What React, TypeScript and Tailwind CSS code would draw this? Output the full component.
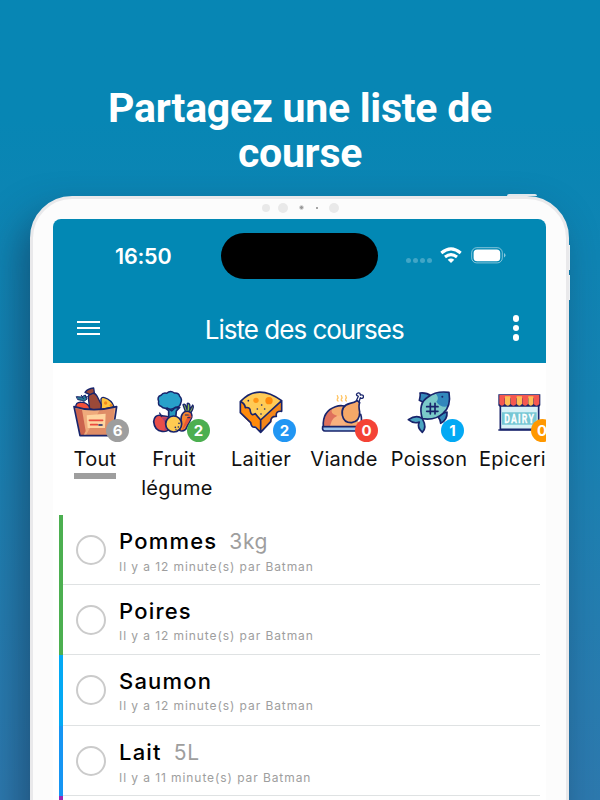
import type { FC, ReactNode } from "react";

import clsx from "clsx";

const NAVY = "#18246b";

const BasketIcon: FC = () => (
  <svg viewBox="-3 0 216 180" className="h-[60px] w-[72px]" strokeLinejoin="round" strokeLinecap="round">
    <path d="M47 86 Q45 65 65 67 Q78 66 88 80 L90 90Z" fill="#f2503b" stroke={NAVY} strokeWidth="4" />
    <path d="M123 57 Q126 50 133 53 Q155 60 162 80 L123 89Z" fill="#ffc43d" stroke={NAVY} strokeWidth="4" />
    <circle cx="137" cy="69" r="5" fill="#ef8a1d" />
    <circle cx="153" cy="76" r="4" fill="#ef8a1d" />
    <path d="M89 86 L85 54 Q85 40 97 39 Q106 39 111 48 L124 74 L122 90 H100Z" fill="#9b4938" stroke={NAVY} strokeWidth="4" />
    <path d="M75 37 Q83 26 101 24 L103 38 L90 44Z" fill="#9b4938" stroke={NAVY} strokeWidth="4" />
    <path d="M50 50 L64 51 L76 45 L81 57 L72 64 L64 61 L54 59Z" fill="#287c94" stroke={NAVY} strokeWidth="3" />
    <path d="M64 46 L70 56 M76 51 L84 50" stroke={NAVY} strokeWidth="3" />
    <path d="M42 80 Q98 98 170 80 L157 167 H60Z" fill="#efaa7b" />
    <path d="M45 84 L66 89 L77 153 L70 167 H60Z" fill="#cb634d" />
    <path d="M119 90 Q149 87 163 82 L157 167 H77Z" fill="#df8d67" />
    <path d="M80 106 L137 101 L135 144 H83Z" fill="#fed5a0" />
    <path d="M42 80 Q98 98 170 80 L157 167 H60Z" fill="none" stroke={NAVY} strokeWidth="5" />
    <path d="M88 121 H128 M92 134 H112" stroke="#ea4b3e" strokeWidth="5" />
    <path d="M117 135 H126" stroke={NAVY} strokeWidth="5" />
  </svg>
);

const VegetableIcon: FC = () => (
  <svg viewBox="3 0 216 180" className="h-[60px] w-[72px]" strokeLinejoin="round" strokeLinecap="round">
    <path d="M61 106 Q43 104 41 125 Q44 153 66 154 Q91 158 93 130 Q92 107 71 108Z" fill="#e94e49" stroke={NAVY} strokeWidth="5" />
    <path d="M65 113 Q80 126 73 151 Q89 148 91 127 L84 112Z" fill="#ab426f" />
    <path d="M65 110 L59 99" stroke={NAVY} strokeWidth="4" />
    <path d="M76 84 L86 92 V114 H107 L109 93 L119 82Z" fill="#279abd" stroke={NAVY} strokeWidth="5" />
    <path d="M63 79 Q53 76 56 64 Q50 50 63 46 Q69 37 80 40 Q91 29 103 39 Q117 38 119 49 Q128 58 122 70 Q120 81 106 82 Q93 92 82 84 Q70 87 63 79Z" fill="#28a1ca" stroke={NAVY} strokeWidth="4.5" />
    <path d="M88 88 L95 93 L102 87" fill="none" stroke={NAVY} strokeWidth="4" />
    <path d="M136 94 L129 74 Q136 67 141 89 L142 70 Q153 68 149 91 L158 75 Q164 79 153 98Z" fill="#8dbe49" stroke={NAVY} strokeWidth="4" />
    <path d="M124 109 Q129 92 145 94 Q158 99 155 112 L137 148 Q127 156 119 151Z" fill="#f58730" stroke={NAVY} strokeWidth="5" />
    <path d="M151 99 L138 119 L125 152 L145 128 L155 111Z" fill="#e75636" />
    <path d="M136 105 H145 M143 113 H150" stroke={NAVY} strokeWidth="3" />
    <circle cx="101" cy="132" r="24" fill="#ffcb51" stroke={NAVY} strokeWidth="5" />
    <g fill={NAVY}>
      <circle cx="117" cy="130" r="2.5" />
      <circle cx="106" cy="142" r="2.5" />
      <circle cx="115" cy="141" r="2.5" />
      <circle cx="108" cy="148" r="2" />
    </g>
  </svg>
);

const CheeseIcon: FC = () => (
  <svg viewBox="0 0 216 180" className="h-[60px] w-[72px]" strokeLinejoin="round" strokeLinecap="round">
    <path d="M46 65 Q98 9 170 62 L107 121 L91 105 Q75 105 75 88 Q58 86 46 65Z" fill="#ffcb56" />
    <path d="M46 65 Q57 69 61 83 Q74 80 76 94 Q83 109 91 101 Q97 109 107 120 V157 Q96 151 91 138 Q84 144 77 129 Q62 119 46 98Z" fill="#ff8a0b" />
    <path d="M107 120 L170 62 V94 Q156 91 154 109 Q140 111 139 127 L107 157Z" fill="#f58619" />
    <path d="M46 65 Q98 9 170 62 V94 Q151 92 154 109 Q137 108 137 125 L107 157 L91 141 Q79 144 77 128 L46 98Z M46 65 Q59 69 61 83 Q76 80 76 94 Q79 109 91 101 Q98 110 107 120 L170 62 M107 120 V157" fill="none" stroke={NAVY} strokeWidth="5" />
    <circle cx="93" cy="61" r="8" fill="#ff9414" />
    <circle cx="132" cy="62" r="11" fill="#ff8a0b" />
    <g fill={NAVY}>
      <circle cx="70" cy="62" r="2.5" />
      <circle cx="110" cy="75" r="2.5" />
      <circle cx="119" cy="87" r="2.5" />
      <circle cx="97" cy="87" r="2.5" />
      <circle cx="108" cy="102" r="2.5" />
    </g>
  </svg>
);

const MeatIcon: FC = () => (
  <svg viewBox="-6 0 216 180" className="h-[60px] w-[72px]" strokeLinejoin="round" strokeLinecap="round">
    <path d="M82 47 Q86 53 82 57 Q80 60 84 63 M94 47 Q98 53 94 57 Q92 60 96 63 M107 47 Q111 53 107 57 Q105 60 109 63" fill="none" stroke="#ffc565" strokeWidth="4" />
    <path d="M40 139 Q37 94 76 80 Q111 71 125 89 L152 139Z" fill="#f5ac70" />
    <path d="M42 137 Q40 101 66 88 Q59 101 81 107 Q76 126 93 138Z" fill="#df705c" />
    <path d="M60 138 Q67 104 97 106 L108 138Z" fill="#f7b17f" />
    <path d="M40 139 Q37 94 76 80 Q91 75 102 78 M152 103 Q158 121 150 139" fill="none" stroke={NAVY} strokeWidth="5" />
    <path d="M97 106 Q92 77 120 70 Q134 68 142 61 L149 68 Q145 77 149 96 Q150 124 125 128 Q102 129 97 106Z" fill="#f5a868" stroke={NAVY} strokeWidth="5" />
    <path d="M140 60 L145 49 Q134 44 144 39 Q151 38 151 45 Q162 43 160 52 Q157 58 151 53 L147 66Z" fill="#fff" stroke={NAVY} strokeWidth="4" />
    <path d="M38 140 H151 V153 H45 Q36 153 38 140Z" fill="#9bc4ed" stroke={NAVY} strokeWidth="5" />
  </svg>
);

const FishIcon: FC = () => (
  <svg viewBox="-6 0 216 180" className="h-[60px] w-[72px]" strokeLinejoin="round" strokeLinecap="round">
    <path d="M73 61 Q77 44 75 39 Q95 37 108 48 L88 68Z M137 105 Q146 98 156 96 Q158 119 137 130 Q137 119 130 112Z" fill="#3389ba" stroke={NAVY} strokeWidth="5" />
    <path d="M82 116 Q68 70 99 51 Q123 32 162 37 Q169 78 145 99 Q121 122 82 116Z" fill="#7ac9c9" />
    <path d="M123 42 Q143 34 162 37 Q165 61 158 79 Q138 85 124 65 Q134 55 123 42Z" fill="#3187bc" />
    <path d="M82 116 Q68 70 99 51 Q123 32 162 37 Q169 78 145 99 Q121 122 82 116Z" fill="none" stroke={NAVY} strokeWidth="5" />
    <path d="M82 116 Q65 102 40 119 Q57 133 73 126 Q65 142 82 157 Q97 143 82 116Z" fill="#4ba5c1" stroke={NAVY} strokeWidth="5" />
    <path d="M106 70 V102 M120 70 V102 M95 80 H129 M95 94 H129" stroke={NAVY} strokeWidth="5" />
    <circle cx="142" cy="50" r="3" fill={NAVY} />
  </svg>
);

const DairyIcon: FC = () => (
  <svg viewBox="21 0 216 180" className="h-[60px] w-[72px]" strokeLinejoin="round">
    <path d="M73 72 H188 V148 H73Z" fill="#d7f1f7" stroke={NAVY} strokeWidth="5" />
    <path d="M78 97 H182 V134 H78Z" fill="#76c7d4" />
    <path d="M67 150 H192" stroke={NAVY} strokeWidth="5" />
    <text
      x="131"
      y="129"
      textAnchor="middle"
      textLength="92"
      lengthAdjust="spacingAndGlyphs"
      fontFamily="Roboto, sans-serif"
      fontSize="37"
      fontWeight="700"
      letterSpacing="5"
      fill="#fff"
      stroke="#fff"
      strokeWidth="0.8"
    >
      DAIRY
    </text>
    <path d="M67 43 H193 V74 Q193 80 184 80 H76 Q67 80 67 74Z" fill={NAVY} />
    <path d="M70 45 H190 V55 H70Z" fill="#f55750" />
    <path d="M70 53 H86 V72 Q78 83 70 72Z M104 53 H121 V72 Q112 83 104 72Z M139 53 H156 V72 Q148 83 139 72Z M173 53 H190 V72 Q182 83 173 72Z" fill="#f55750" />
    <path d="M87 49 H103 V72 Q95 83 87 72Z M122 49 H138 V72 Q130 83 122 72Z M157 49 H172 V72 Q164 83 157 72Z" fill="#ffbd54" />
  </svg>
);

type Category = {
  label: string;
  count: number;
  icon: ReactNode;
  width: string;
  badge: string;
  active?: boolean;
};

const categories: Category[] = [
  { label: "Tout", count: 6, icon: <BasketIcon />, width: "w-20", badge: "left-[47px] bg-[#9e9e9e]", active: true },
  { label: "Fruit\u00a0 légume", count: 2, icon: <VegetableIcon />, width: "w-21", badge: "left-[46px] bg-[#4caf50]" },
  { label: "Laitier", count: 2, icon: <CheeseIcon />, width: "w-21", badge: "left-12 bg-[#2196f3]" },
  { label: "Viande", count: 0, icon: <MeatIcon />, width: "w-[82px]", badge: "left-[47px] bg-[#f44336]" },
  { label: "Poisson", count: 1, icon: <FishIcon />, width: "w-22", badge: "left-12 bg-[#03a9f4]" },
  { label: "Epicerie", count: 0, icon: <DairyIcon />, width: "w-[91px]", badge: "left-12 bg-[#ff9800]" },
];

const items = [
  { name: "Pommes", quantity: "3kg", minutes: 12, color: "bg-[#4caf50]" },
  { name: "Poires", minutes: 12, color: "bg-[#4caf50]" },
  { name: "Saumon", minutes: 12, color: "bg-[#03a9f4]" },
  { name: "Lait", quantity: "5L", minutes: 11, color: "bg-[#1695f3]" },
];

const StatusBar: FC = () => (
  <div className="flex h-[74px] items-start pt-[14px]">
    <div className="w-[168px] pt-[9px] pl-[62px] text-[21.5px] leading-7 font-semibold tracking-[-0.2px]">16:50</div>
    <div className="h-[46px] w-[157px] rounded-full bg-black" />
    <div className="flex items-center pt-[14px] pl-[28px]">
      <div className="mt-[10px] flex gap-[2px]">
        {[0, 1, 2, 3].map((dot) => (
          <div key={dot} className="size-[5px] rounded-full bg-white/25" />
        ))}
      </div>
      <svg viewBox="0 0 22 17" className="ml-2 h-[17px] w-[22px]" fill="none" stroke="white" strokeWidth="3">
        <path d="M1.3 6 Q11 -2.3 20.7 6" />
        <path d="M5 10 Q11 5.2 17 10" />
        <path d="M7.7 12.7 Q11 10.2 14.3 12.7 L11 16Z" fill="white" stroke="none" />
      </svg>
      <svg viewBox="0 0 35 17" className="ml-[8.5px] h-[17px] w-[35px]">
        <rect x="0.7" y="0.7" width="30.6" height="15.2" rx="5" fill="none" stroke="white" strokeOpacity="0.5" />
        <rect x="2.6" y="2.5" width="26.6" height="11.8" rx="3.6" fill="white" />
        <path d="M33 6 Q36 8 33 10.5Z" fill="white" fillOpacity="0.55" />
      </svg>
    </div>
  </div>
);

const AppBar: FC = () => (
  <div className="flex h-[70px] items-center justify-between pr-[24px] pl-6">
    <div className="flex flex-col gap-1">
      <div className="h-[2px] w-[23px] bg-white" />
      <div className="h-[2px] w-[23px] bg-white" />
      <div className="h-[2px] w-[23px] bg-white" />
    </div>
    <div className="pt-[2px] pr-[1px] text-[26px] tracking-[-1px]">Liste des courses</div>
    <div className="flex flex-col gap-[3px] px-[3px]">
      <div className="size-[6.5px] rounded-full bg-white" />
      <div className="size-[6.5px] rounded-full bg-white" />
      <div className="size-[6.5px] rounded-full bg-white" />
    </div>
  </div>
);

const CategoryTab: FC<{ category: Category }> = ({ category }) => (
  <div className={clsx("flex shrink-0 flex-col items-center", category.width)}>
    <div className="relative">
      {category.icon}
      <div
        className={clsx(
          "absolute top-[39px] flex size-[23px] items-center justify-center rounded-full pt-px text-[15px] font-bold text-white",
          category.badge,
        )}
      >
        {category.count}
      </div>
    </div>
    <div
      className={clsx(
        "mt-[5px] text-center text-[20px] tracking-[0.3px]",
        category.active ? "border-b-6 border-[#9e9e9e] leading-[28px]" : "leading-[29px]",
      )}
    >
      {category.label}
    </div>
  </div>
);

const ItemsList: FC = () => (
  <div className="mx-[6px] mt-[12px]">
    {items.map((item) => (
      <div key={item.name} className="flex h-[70.2px]">
        <div className={clsx("w-1", item.color)} />
        <div className="flex flex-1 border-b border-[#dfe2e3] pl-[13px]">
          <div className="mt-5 size-[30px] rounded-full border-2 border-[#cbcbcb]" />
          <div className="pt-3 pl-[13px]">
            <div className="text-[22px] leading-7 font-[470] tracking-[1.2px] text-black">
              {item.name}
              {item.quantity && (
                <span className="ml-3 text-[21px] font-normal tracking-[0.6px] text-[#9e9e9e]">{item.quantity}</span>
              )}
            </div>
            <div className="mt-px text-[12px] leading-5 tracking-[0.92px] text-[#9e9e9e]">
              Il y a {item.minutes} minute(s) par Batman
            </div>
          </div>
        </div>
      </div>
    ))}
    <div className="h-[70px] w-1 bg-[#9c27b0]" />
  </div>
);

const Device: FC = () => (
  <div className="relative mt-5 ml-[30px] h-[700px] w-[539px] rounded-[42px] border-[3px] border-[#e9e9eb] bg-[#fcfcfc] px-5 shadow-[-10px_18px_36px_rgba(20,45,75,0.5)]">
    <div className="absolute -top-[5px] right-[29px] h-[2px] w-[30px] rounded-t bg-[#dfe7ec]" />
    <div className="absolute top-[46px] -right-[4px] h-[25px] w-[1.5px] bg-[#edf1f4]" />
    <div className="absolute top-[76px] -right-[4px] h-[25px] w-[1.5px] bg-[#edf1f4]" />
    <div className="flex h-[20px] items-center justify-center pb-[3px] pl-[2px]">
      <div className="size-2 rounded-full bg-[#e9e9e9]" />
      <div className="ml-2 size-[10px] rounded-full bg-[#e9e9e9]" />
      <div className="ml-[11px] size-[5px] rounded-full border border-[#ddd] bg-[#999]" />
      <div className="ml-[12px] size-[2px] rounded-full bg-[#888]" />
      <div className="ml-[11px] size-[10px] rounded-full bg-[#e9e9e9]" />
    </div>
    <div className="h-[677px] overflow-hidden rounded-t-[8px] bg-white">
      <header className="bg-[#0288b4] text-white">
        <StatusBar />
        <AppBar />
      </header>
      <div className="flex h-[140px] pt-[17px] pl-[2px]">
        {categories.map((category) => (
          <CategoryTab key={category.label} category={category} />
        ))}
      </div>
      <ItemsList />
    </div>
  </div>
);

export default function App() {
  return (
    <main className="h-[800px] w-[600px] overflow-hidden bg-linear-to-b from-[#0786b4] from-15% via-[#1582b2] via-50% to-[#2d79ae] font-['Inter',sans-serif] text-[#111]">
      <h1 className="mx-auto w-[440px] pt-[86px] text-center font-['Roboto',sans-serif] text-[41px] leading-[45px] font-bold tracking-[-0.25px] text-white">
        Partagez une liste de course
      </h1>
      <Device />
    </main>
  );
}
